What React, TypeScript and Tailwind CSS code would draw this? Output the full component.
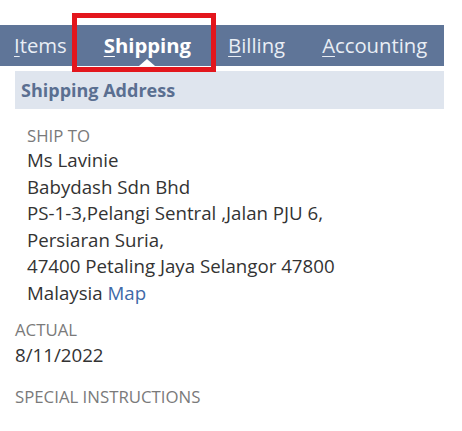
export default function App() {
  const tabs = [
    { key: 'I', rest: 'tems', active: false },
    { key: 'S', rest: 'hipping', active: true },
    { key: 'B', rest: 'illing', active: false },
    { key: 'A', rest: 'ccounting', active: false },
  ]

  return (
    <div className="relative w-[462px] h-[431px] bg-white font-['Open_Sans',sans-serif] overflow-hidden">
      <div className="pt-[25px]">
        {/* tab bar */}
        <div className="flex items-center gap-[37px] pl-[14px] w-[444px] h-[41px] bg-[#5f7598]">
          {tabs.map((t) => (
            <div
              key={t.key}
              className={`relative h-full flex items-center text-[20.3px] ${
                t.active ? 'font-bold text-white' : 'text-[#e9eef5]'
              }`}
            >
              <span>
                <span className="underline underline-offset-[3px] decoration-[1px]">{t.key}</span>
                {t.rest}
              </span>
              {t.active && (
                <span className="absolute bottom-0 left-1/2 -translate-x-1/2 w-0 h-0 border-l-[8px] border-r-[8px] border-b-[7px] border-l-transparent border-r-transparent border-b-white" />
              )}
            </div>
          ))}
        </div>

        {/* section header */}
        <div className="ml-[15px] mt-[5px] w-[429px] h-[38px] flex items-center pl-[6px] bg-[#dfe5ee]">
          <span className="text-[18px] font-bold text-[#5a6f91]">Shipping Address</span>
        </div>

        {/* address */}
        <div className="pl-[27px] pt-[16px]">
          <div className="text-[16.8px] leading-[22px] text-[#7a7a7a]">SHIP TO</div>
          <div className="text-[18.7px] leading-[26.6px] text-[#333333]">
            <div>Ms Lavinie</div>
            <div>Babydash Sdn Bhd</div>
            <div>PS-1-3,Pelangi Sentral ,Jalan PJU 6,</div>
            <div>Persiaran Suria,</div>
            <div>47400 Petaling Jaya Selangor 47800</div>
            <div>
              Malaysia <span className="text-[#3f6aa8]">Map</span>
            </div>
          </div>
        </div>

        <div className="pl-[15px] pt-[12px]">
          <div className="text-[16.8px] leading-[22px] text-[#7a7a7a]">ACTUAL</div>
          <div className="text-[18.7px] leading-[27px] text-[#333333]">8/11/2022</div>
        </div>

        <div className="pl-[15px] pt-[18px]">
          <div className="text-[16.8px] leading-[22px] text-[#7a7a7a]">SPECIAL INSTRUCTIONS</div>
        </div>
      </div>

      {/* red highlight annotation */}
      <div className="absolute left-[72px] top-[13px] w-[144px] h-[59px] border-[5px] border-[#e3161d]" />
    </div>
  )
}
